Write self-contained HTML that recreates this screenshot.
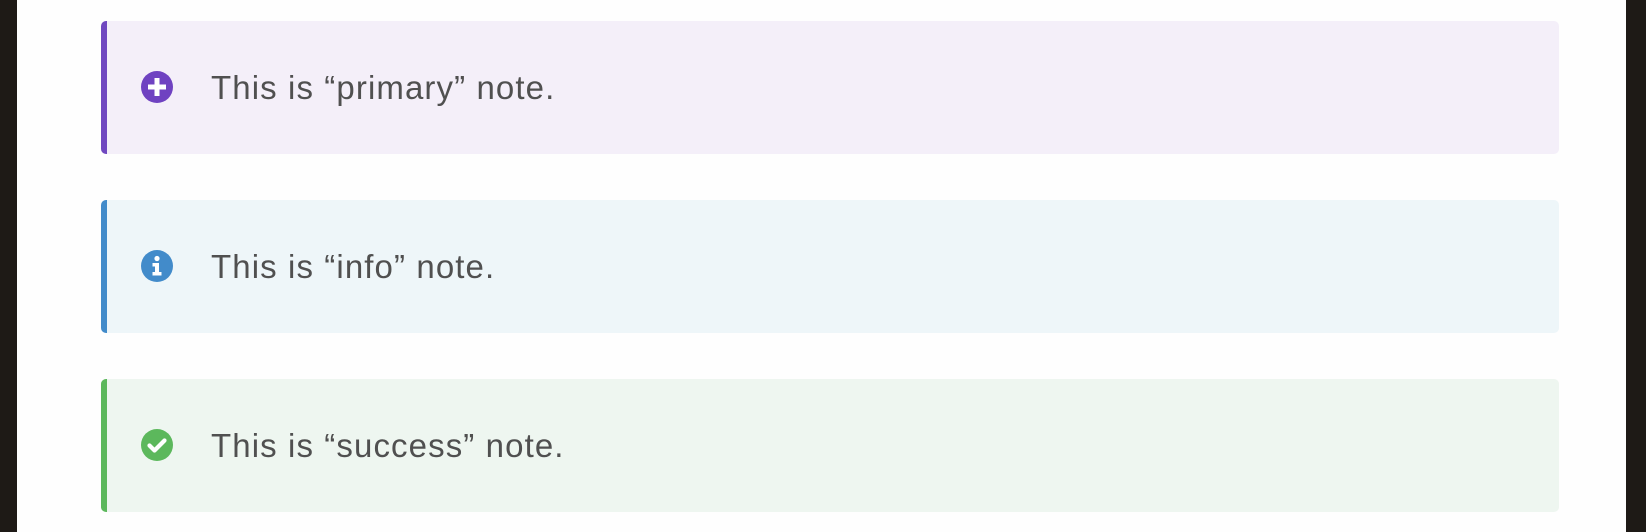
<!DOCTYPE html>
<html><head><style>
html,body{margin:0;padding:0}
body{width:1646px;height:532px;background:#1e1a16;position:relative;overflow:hidden;font-family:"Liberation Sans",sans-serif}
.page{position:absolute;left:17px;top:0;width:1609px;height:532px;background:#fefefe}
.note{position:absolute;left:101px;width:1458px;height:133px;border-radius:5px;box-sizing:border-box;border-left:6px solid}
.note svg{position:absolute;left:34px;top:50px}
.note span{position:absolute;left:104px;top:48px;font-size:33px;color:#505050;line-height:38px;letter-spacing:1.1px}
</style></head><body>
<div class="page"></div>
<div class="note" style="top:21px;background:#f4eff9;border-color:#7048c0">
<svg width="32" height="32" viewBox="0 0 32 32"><circle cx="16" cy="16" r="16" fill="#6f42c1"/><path d="M13.5 7h5v6.5H25v5h-6.5V25h-5v-6.5H7v-5h6.5z" fill="#fff"/></svg>
<span>This is “primary” note.</span></div>
<div class="note" style="top:200px;background:#eef6f9;border-color:#428bca">
<svg width="32" height="32" viewBox="0 0 32 32"><circle cx="16" cy="16" r="16" fill="#428bca"/><circle cx="16" cy="8.5" r="2.6" fill="#fff"/><path d="M11.5 13h6.5v9h2.5v3.5h-9V22h2.5v-5.5h-2.5z" fill="#fff"/></svg>
<span>This is “info” note.</span></div>
<div class="note" style="top:379px;background:#eef6f0;border-color:#5cb85c">
<svg width="32" height="32" viewBox="0 0 32 32"><circle cx="16" cy="16" r="16" fill="#5cb85c"/><path d="M8.5 16.5l5 5 10-10" stroke="#fff" stroke-width="4.2" fill="none" stroke-linecap="round" stroke-linejoin="round"/></svg>
<span>This is “success” note.</span></div>
</body></html>
